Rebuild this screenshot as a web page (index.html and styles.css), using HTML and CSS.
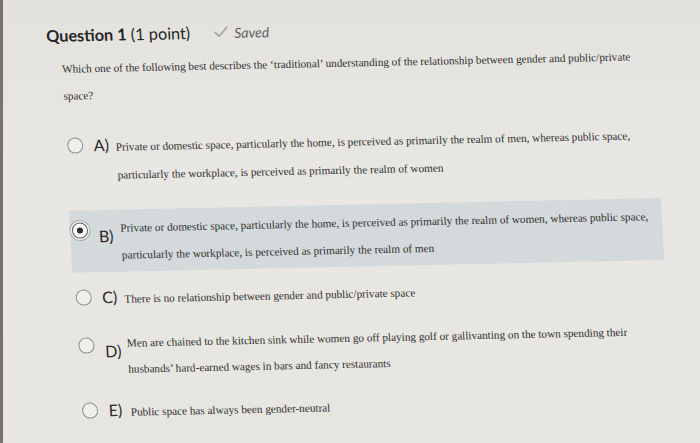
FILE: index.html
```html
<!DOCTYPE html>
<html lang="en">
<head>
<meta charset="utf-8">
<title>Question 1</title>
<link rel="stylesheet" href="styles.css">
</head>
<body>
<div class="screen">
  <div class="bezel"></div>
  <main class="page">
    <header class="q-head">
      <h1 class="q-title"><strong>Question 1</strong> (1 point)</h1>
      <span class="saved">
        <svg class="check" viewBox="0 0 14 11" width="14" height="11" aria-hidden="true"><path d="M1 6 L5 10 L13 1" fill="none" stroke="#a3a3a3" stroke-width="1.6" stroke-linecap="round" stroke-linejoin="round"/></svg>
        <em>Saved</em>
      </span>
    </header>
    <p class="q-text">Which one of the following best describes the ‘traditional’ understanding of the relationship between gender and public/private space?</p>
    <ul class="options">
      <li class="opt opt-a">
        <span class="radio"></span>
        <span class="letter">A)</span>
        <span class="text">Private or domestic space, particularly the home, is perceived as primarily the realm of men, whereas public space, particularly the workplace, is perceived as primarily the realm of women</span>
      </li>
      <li class="opt opt-split selected">
        <span class="radio checked"></span>
        <span class="letter">B)</span>
        <span class="text">Private or domestic space, particularly the home, is perceived as primarily the realm of women, whereas public space, particularly the workplace, is perceived as primarily the realm of men</span>
      </li>
      <li class="opt">
        <span class="radio"></span>
        <span class="letter">C)</span>
        <span class="text">There is no relationship between gender and public/private space</span>
      </li>
      <li class="opt opt-split opt-d">
        <span class="radio"></span>
        <span class="letter">D)</span>
        <span class="text">Men are chained to the kitchen sink while women go off playing golf or gallivanting on the town spending their husbands’ hard-earned wages in bars and fancy restaurants</span>
      </li>
      <li class="opt">
        <span class="radio"></span>
        <span class="letter">E)</span>
        <span class="text">Public space has always been gender-neutral</span>
      </li>
    </ul>
  </main>
</div>
</body>
</html>
```
FILE: styles.css
```css
html, body {
  margin: 0;
  height: 443px;
  overflow: hidden;
}
body {
  background: linear-gradient(to bottom, #e3e2de 0%, #e8e7e3 45%, #e7e5e0 100%);
  font-family: Lato, "Liberation Sans", sans-serif;
  color: #2b2b2b;
}
.screen {
  display: flex;
  height: 443px;
}
.bezel {
  flex: none;
  width: 3px;
  background: #77736c;
}
.page {
  flex: 1;
  padding: 26px 0 0 41px;
  transform: matrix(1, -0.0218, 0.056, 1, 0, 0);
  transform-origin: 0 0;
}
.q-head {
  display: flex;
  align-items: baseline;
  gap: 24px;
  height: 22px;
}
.q-title {
  margin: 0;
  font-size: 16.3px;
  line-height: 22px;
  font-weight: 400;
  color: #262626;
}
.q-title strong {
  font-weight: 700;
}
.saved {
  display: flex;
  align-items: baseline;
  gap: 6px;
  color: #5f5f5f;
  font-size: 14px;
}
.check {
  align-self: center;
  position: relative;
  top: -1px;
}
.q-text {
  margin: 9px 0 0 14px;
  width: 600px;
  font-family: "Liberation Serif", serif;
  font-size: 11.2px;
  line-height: 27px;
  color: #2f2f2f;
}
.options {
  list-style: none;
  margin: 19px 0 0 12.5px;
  padding: 0;
  display: flex;
  flex-direction: column;
  gap: 9px;
}
.opt {
  width: 592px;
  box-sizing: border-box;
  display: flex;
  align-items: flex-start;
  padding: 5px 0 3px 2px;
}
.opt-a {
  margin-bottom: 8.5px;
}
.opt-a .text {
  line-height: 28px;
}
.opt-d .text {
  line-height: 26px;
}
.selected {
  background: #d4d9db;
}
.radio {
  flex: none;
  width: 16px;
  height: 16px;
  box-sizing: border-box;
  border-radius: 50%;
  border: 1.5px solid #8f8f8f;
  background: #eeeeec;
  margin-top: 3.5px;
  display: flex;
  align-items: center;
  justify-content: center;
}
.radio.checked {
  border-color: #5c5c5c;
  background: #fbfbfb;
  box-shadow: 0 0 0 1.5px #f3f3f3, 0 0 0 2.5px #a9a9a9;
}
.radio.checked::after {
  content: "";
  width: 6px;
  height: 6px;
  border-radius: 50%;
  background: #2f2f2f;
}
.letter {
  flex: none;
  width: 22px;
  margin: 1.5px 0 0 11px;
  font-size: 16px;
  line-height: 20px;
  color: #2a2a2a;
}
.opt-split .radio {
  margin-top: 7px;
}
.opt-split .letter {
  margin-top: 11px;
}
.text {
  max-width: 536px;
  font-family: "Liberation Serif", serif;
  font-size: 11.2px;
  line-height: 27px;
  color: #2f2f2f;
}
```
